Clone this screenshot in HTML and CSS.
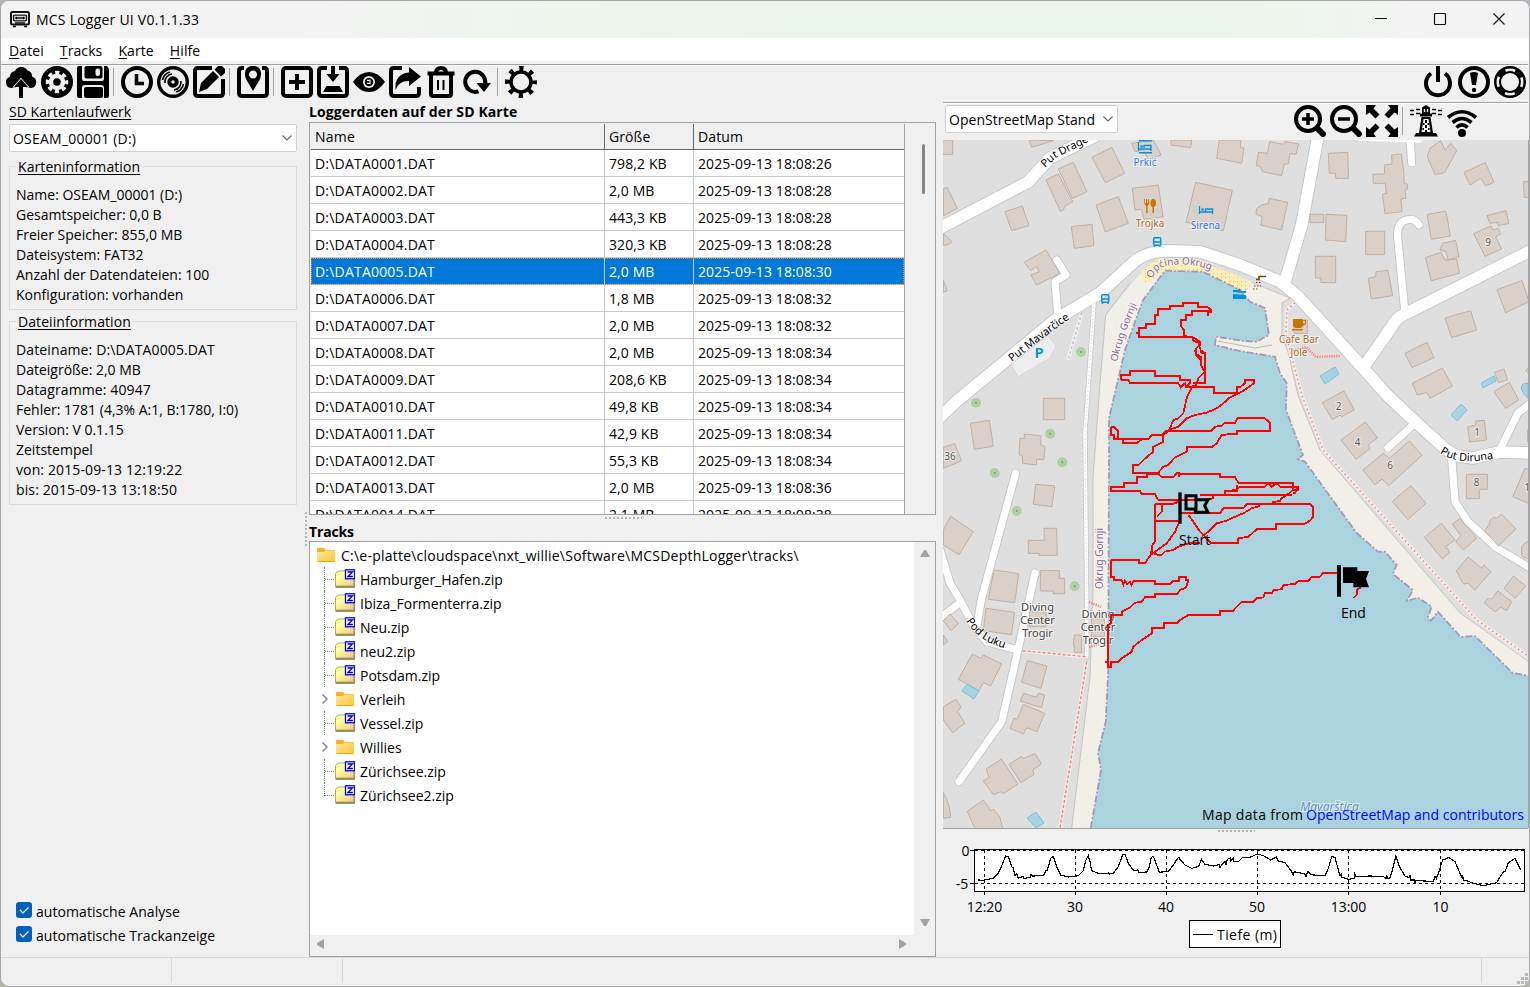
FILE: index.html
```html
<!DOCTYPE html>
<html lang="de">
<head>
<meta charset="utf-8">
<title>MCS Logger UI V0.1.1.33</title>
<link rel="stylesheet" href="styles.css">
</head>
<body>
<svg class="defs" width="0" height="0">
  <defs>
    <linearGradient id="fg" x1="0" y1="0" x2="1" y2="1"><stop offset="0" stop-color="#ffe9a6"/><stop offset="1" stop-color="#fcc62f"/></linearGradient>
    <linearGradient id="zg" x1="0" y1="0" x2="1" y2="1"><stop offset="0.3" stop-color="#ffff9c"/><stop offset="1" stop-color="#f5c586"/></linearGradient>
    <symbol id="folder" viewBox="0 0 20 18"><path d="M1 3q0-1 1-1h6l1.500 2H18q1 0 1 1v5H1z" fill="#f9b01d"/><path d="M1 6h7l1.500-1.500H19V15q0 1-1 1H2q-1 0-1-1z" fill="url(#fg)"/><path d="M1.500 15.600h17" stroke="#e5a21a"/></symbol>
    <symbol id="zip" viewBox="0 0 20 20"><path d="M0.500 17V4.500L3 2h7l1.500 2H19v13z" fill="url(#zg)" stroke="#b9ae5c"/><path d="M0.500 18h19.500" stroke="#77734a" stroke-width="1.500"/><path d="M19.300 9v9" stroke="#8a824f"/><rect x="10.500" y="0.800" width="9" height="9" fill="#fff" stroke="#00f" stroke-width="1.300"/><path d="M12.500 3h5l-4.600 4.500h4.900" fill="none" stroke="#00c" stroke-width="1.300"/></symbol>
    <symbol id="chev" viewBox="0 0 12 8"><path d="M1.500 1.500 6 6l4.500-4.500" fill="none" stroke="#666" stroke-width="1.100"/></symbol>
    <pattern id="dots" width="4" height="4" patternUnits="userSpaceOnUse"><rect width="4" height="4" fill="#fceeb5"/><rect x="1" y="1" width="1" height="1" fill="#dcc07f"/></pattern>
  </defs>
</svg>
<div class="window">
  <header class="titlebar">
    <svg class="appicon" width="20" height="17" viewBox="0 0 20 17"><rect x="1" y="1" width="18" height="12.500" rx="1.500" fill="#fff" stroke="#111" stroke-width="2"/><rect x="3.500" y="4.200" width="13" height="5.600" rx="1" fill="#ddd" stroke="#111" stroke-width="1.300"/><circle cx="6.500" cy="7" r="1.300"/><circle cx="13.500" cy="7" r="1.300"/><path d="M8 7h4M5 12h10M3 15.500h3M14 15.500h3" stroke="#111" stroke-width="1.500"/></svg>
    <span class="title">MCS Logger UI V0.1.1.33</span>
    <div class="winbtns">
      <svg width="14" height="14" viewBox="0 0 14 14"><path d="M1 5.500h12" stroke="#111"/></svg>
      <svg width="14" height="14" viewBox="0 0 14 14"><rect x="1.500" y="0.500" width="11" height="11" rx="1" fill="none" stroke="#111" stroke-width="1.200"/></svg>
      <svg width="14" height="14" viewBox="0 0 14 14"><path d="M1.500 .5l11 11M12.500 .5l-11 11" stroke="#111" stroke-width="1.100"/></svg>
    </div>
  </header>
  <nav class="menubar"><span><u>D</u>atei</span><span><u>T</u>racks</span><span><u>K</u>arte</span><span><u>H</u>ilfe</span></nav>
  <div class="toolbar">
    <div class="tools">
      <svg viewBox="0 0 32 32"><path d="M6 22a5.800 5.800 0 0 1-1-11.300A6 6 0 0 1 10 5 7 7 0 0 1 22.500 4.500 6 6 0 0 1 27 10.500 5.900 5.900 0 0 1 26 22h-4.500L16 12 10.500 22z"/><path d="M16 13l7 8h-5v11h-4V21H9z" stroke="#f0f0f0" stroke-width="1.600" paint-order="stroke"/></svg>
      <svg viewBox="0 0 32 32"><circle cx="16" cy="16" r="16"/><circle cx="16" cy="16" r="6" fill="none" stroke="#f0f0f0" stroke-width="4.500"/><circle cx="16" cy="16" r="9.500" fill="none" stroke="#f0f0f0" stroke-width="3.500" stroke-dasharray="4.200 3.261" stroke-dashoffset="2.100"/></svg>
      <svg viewBox="0 0 32 32"><path d="M2 0h3v13q0 2 2 2h18q2 0 2-2V0h3l2 3v27q0 2-2 2h-3V22q0-3-3-3H8q-3 0-3 3v10H2q-2 0-2-2V2q0-2 2-2z"/><rect x="7.500" y="0" width="18" height="12.500" rx="2"/><rect x="18.500" y="2.500" width="4.500" height="7.500" rx="2" fill="#f0f0f0"/><rect x="7" y="21" width="19" height="11" rx="2"/></svg>
      <i></i>
      <svg viewBox="0 0 32 32"><circle cx="16" cy="16" r="14" fill="none" stroke="#000" stroke-width="4"/><path d="M15.500 8v9.500H23" fill="none" stroke="#000" stroke-width="3.600"/></svg>
      <svg viewBox="0 0 32 32"><circle cx="16" cy="16" r="14.300" fill="none" stroke="#000" stroke-width="3.400"/><circle cx="16" cy="16" r="3.700" fill="none" stroke="#000" stroke-width="4"/><path d="M8 17A8 8 0 0 1 15 8M5.500 14A10.500 10.500 0 0 1 13 6M24 15A8 8 0 0 1 17 24M26.500 18A10.500 10.500 0 0 1 19 26" fill="none" stroke="#000" stroke-width="1.600"/></svg>
      <svg viewBox="0 0 32 32"><path d="M19 2H5Q2 2 2 5v22q0 3 3 3h22q3 0 3-3V13" fill="none" stroke="#000" stroke-width="4"/><path d="M6 26l2-9L20 5l6 6-12 12z"/><path d="M21.500 3.500L25 0h4l3 3v4l-4 3.500z"/></svg>
      <i></i>
      <svg viewBox="0 0 32 32"><path d="M7 2H5Q2 2 2 5v22q0 3 3 3h22q3 0 3-3V5q0-3-3-3h-2" fill="none" stroke="#000" stroke-width="4"/><path fill-rule="evenodd" d="M16 25L9.500 14Q6 6 10 2q6-4.500 12 0 4 4 .500 12zM16 4.500a4 4 0 1 0 .01 0z"/></svg>
      <i></i>
      <svg viewBox="0 0 32 32"><rect x="2" y="2" width="28" height="28" rx="3" fill="none" stroke="#000" stroke-width="4"/><path d="M16 8v16M8 16h16" stroke="#000" stroke-width="4"/></svg>
      <svg viewBox="0 0 32 32"><path d="M10 2H5Q2 2 2 5v22q0 3 3 3h22q3 0 3-3V5q0-3-3-3h-5" fill="none" stroke="#000" stroke-width="4"/><path d="M14 0h4v8h4.500L16 16 9.500 8H14zM9.500 20h13L26 26H6z"/></svg>
      <svg viewBox="0 0 32 32"><path d="M0 16Q7 6 16 6t16 10Q25 26 16 26T0 16z"/><circle cx="16" cy="16" r="6" fill="#f0f0f0"/><circle cx="16" cy="16" r="4.300"/><path d="M14 14.300h3v3h-3" fill="none" stroke="#f0f0f0" stroke-width="1.200"/></svg>
      <svg viewBox="0 0 32 32"><path d="M13 2H5Q2 2 2 5v22q0 3 3 3h22q3 0 3-3v-6" fill="none" stroke="#000" stroke-width="4"/><path d="M20 1l12 9.500L20 20v-5Q10 14.500 6.500 24 5 8 20 6.500z"/></svg>
      <svg viewBox="0 0 32 32"><path d="M2.500 5.500h27v4h-27z"/><path d="M11 7Q11 2 16 2t5 5" fill="none" stroke="#000" stroke-width="4"/><path d="M6 8v20q0 2 2 2h16q2 0 2-2V8" fill="none" stroke="#000" stroke-width="4"/><path d="M13 14v10M18.500 14v10" stroke="#000" stroke-width="2"/></svg>
      <svg viewBox="0 0 32 32"><path d="M17.500 25.300A10 10 0 1 1 24 18" fill="none" stroke="#000" stroke-width="4"/><path d="M15.500 17h14.500l-7 9z"/></svg>
      <i></i>
      <svg viewBox="0 0 32 32"><circle cx="16" cy="16" r="10" fill="none" stroke="#000" stroke-width="3.600"/><circle cx="16" cy="16" r="13.500" fill="none" stroke="#000" stroke-width="5" stroke-dasharray="4.200 6.403" stroke-dashoffset="2.100"/></svg>
    </div>
    <div class="tools end">
      <svg viewBox="0 0 32 32"><path d="M9 7.500a12 12 0 1 0 14 0" fill="none" stroke="#000" stroke-width="4"/><path d="M16 0v16" stroke="#000" stroke-width="4"/></svg>
      <svg viewBox="0 0 32 32"><circle cx="16" cy="16" r="14" fill="none" stroke="#000" stroke-width="4"/><path d="M12 7q4-2 8 0l-2 12h-4z"/><circle cx="16" cy="24" r="2.200"/></svg>
      <svg viewBox="0 0 32 32"><circle cx="16" cy="16" r="12.500" fill="none" stroke="#000" stroke-width="7"/><circle cx="16" cy="16" r="12.200" fill="none" stroke="#f0f0f0" stroke-width="2.600" stroke-dasharray="10 9.164" stroke-dashoffset="5"/></svg>
    </div>
  </div>

  <main class="main">
    <aside class="side">
      <div class="fieldlabel">SD Kartenlaufwerk</div>
      <div class="combo"><span>OSEAM_00001 (D:)</span><svg width="12" height="8"><use href="#chev"/></svg></div>
      <fieldset class="info card"><legend>Karteninformation</legend>
        <p>Name: OSEAM_00001 (D:)</p><p>Gesamtspeicher: 0,0 B</p><p>Freier Speicher: 855,0 MB</p><p>Dateisystem: FAT32</p><p>Anzahl der Datendateien: 100</p><p>Konfiguration: vorhanden</p>
      </fieldset>
      <fieldset class="info file"><legend>Dateiinformation</legend>
        <p class="wide">Dateiname: D:\DATA0005.DAT</p><p>Dateigröße: 2,0 MB</p><p class="wide">Datagramme: 40947</p><p>Fehler: 1781 (4,3% A:1, B:1780, I:0)</p><p>Version: V 0.1.15</p><p>Zeitstempel</p><p class="wide">von: 2015-09-13 12:19:22</p><p class="wide">bis: 2015-09-13 13:18:50</p>
      </fieldset>
      <div class="checks">
        <div class="check"><svg width="16" height="16" viewBox="0 0 16 16"><rect width="16" height="16" rx="3" fill="#0360b8"/><path d="M4 8l3 3 5.500-5.500" fill="none" stroke="#fff" stroke-width="1.200"/></svg><span>automatische Analyse</span></div>
        <div class="check"><svg width="16" height="16" viewBox="0 0 16 16"><rect width="16" height="16" rx="3" fill="#0360b8"/><path d="M4 8l3 3 5.500-5.500" fill="none" stroke="#fff" stroke-width="1.200"/></svg><span>automatische Trackanzeige</span></div>
      </div>
    </aside>
    <div class="vsplit"></div>
    <section class="middle">
      <h2>Loggerdaten auf der SD Karte</h2>
      <div class="listbox">
        <div class="grid">
          <div class="row head"><span>Name</span><span>Größe</span><span>Datum</span></div>
          <div class="row"><span>D:\DATA0001.DAT</span><span>798,2 KB</span><span>2025-09-13 18:08:26</span></div>
          <div class="row"><span>D:\DATA0002.DAT</span><span>2,0 MB</span><span>2025-09-13 18:08:28</span></div>
          <div class="row"><span>D:\DATA0003.DAT</span><span>443,3 KB</span><span>2025-09-13 18:08:28</span></div>
          <div class="row"><span>D:\DATA0004.DAT</span><span>320,3 KB</span><span>2025-09-13 18:08:28</span></div>
          <div class="row sel"><span>D:\DATA0005.DAT</span><span>2,0 MB</span><span>2025-09-13 18:08:30</span></div>
          <div class="row"><span>D:\DATA0006.DAT</span><span>1,8 MB</span><span>2025-09-13 18:08:32</span></div>
          <div class="row"><span>D:\DATA0007.DAT</span><span>2,0 MB</span><span>2025-09-13 18:08:32</span></div>
          <div class="row"><span>D:\DATA0008.DAT</span><span>2,0 MB</span><span>2025-09-13 18:08:34</span></div>
          <div class="row"><span>D:\DATA0009.DAT</span><span>208,6 KB</span><span>2025-09-13 18:08:34</span></div>
          <div class="row"><span>D:\DATA0010.DAT</span><span>49,8 KB</span><span>2025-09-13 18:08:34</span></div>
          <div class="row"><span>D:\DATA0011.DAT</span><span>42,9 KB</span><span>2025-09-13 18:08:34</span></div>
          <div class="row"><span>D:\DATA0012.DAT</span><span>55,3 KB</span><span>2025-09-13 18:08:34</span></div>
          <div class="row"><span>D:\DATA0013.DAT</span><span>2,0 MB</span><span>2025-09-13 18:08:36</span></div>
          <div class="row"><span>D:\DATA0014.DAT</span><span>2,1 MB</span><span>2025-09-13 18:08:38</span></div>
        </div>
        <div class="vscroll"><b></b></div>
      </div>
      <div class="hsplit list-split"></div>
      <h2 class="h-tracks">Tracks</h2>
      <div class="treebox">
        <div class="treetop">
          <ul class="tree">
            <li class="root"><svg width="20" height="18"><use href="#folder"/></svg><span>C:\e-platte\cloudspace\nxt_willie\Software\MCSDepthLogger\tracks\</span></li>
            <li><em></em><svg width="20" height="20"><use href="#zip"/></svg><span>Hamburger_Hafen.zip</span></li>
            <li><em></em><svg width="20" height="20"><use href="#zip"/></svg><span>Ibiza_Formenterra.zip</span></li>
            <li><em></em><svg width="20" height="20"><use href="#zip"/></svg><span>Neu.zip</span></li>
            <li><em></em><svg width="20" height="20"><use href="#zip"/></svg><span>neu2.zip</span></li>
            <li><em></em><svg width="20" height="20"><use href="#zip"/></svg><span>Potsdam.zip</span></li>
            <li class="dir"><em><svg width="8" height="12" viewBox="0 0 8 12"><path d="M1.500 1.500L6 6l-4.500 4.500" fill="none" stroke="#8a8a8a" stroke-width="1.500"/></svg></em><svg width="20" height="18"><use href="#folder"/></svg><span>Verleih</span></li>
            <li><em></em><svg width="20" height="20"><use href="#zip"/></svg><span>Vessel.zip</span></li>
            <li class="dir"><em><svg width="8" height="12" viewBox="0 0 8 12"><path d="M1.500 1.500L6 6l-4.500 4.500" fill="none" stroke="#8a8a8a" stroke-width="1.500"/></svg></em><svg width="20" height="18"><use href="#folder"/></svg><span>Willies</span></li>
            <li><em></em><svg width="20" height="20"><use href="#zip"/></svg><span>Zürichsee.zip</span></li>
            <li class="last"><em></em><svg width="20" height="20"><use href="#zip"/></svg><span>Zürichsee2.zip</span></li>
          </ul>
          <div class="arrows v"><svg width="10" height="8"><path d="M0 8L4 1h2l4 7z" fill="#a3a3a3"/></svg><svg width="10" height="8"><path d="M0 0l4 7h2l4-7z" fill="#a3a3a3"/></svg></div>
        </div>
        <div class="arrows h"><svg width="8" height="10"><path d="M8 0L1 4v2l7 4z" fill="#a3a3a3"/></svg><svg width="8" height="10"><path d="M0 0l7 4v2l-7 4z" fill="#a3a3a3"/></svg></div>
      </div>
    </section>
    <section class="right">
      <div class="mapbar">
        <div class="combo mapcombo"><span>OpenStreetMap Stand</span><svg width="12" height="8"><use href="#chev"/></svg></div>
        <div class="tools">
          <svg viewBox="0 0 32 32"><circle cx="14" cy="14" r="12" fill="none" stroke="#000" stroke-width="4"/><path d="M22 22l9 9" stroke="#000" stroke-width="6"/><path d="M14 8v12M8 14h12" stroke="#000" stroke-width="3.500"/></svg>
          <svg viewBox="0 0 32 32"><circle cx="14" cy="14" r="12" fill="none" stroke="#000" stroke-width="4"/><path d="M22 22l9 9" stroke="#000" stroke-width="6"/><path d="M8 14h12" stroke="#000" stroke-width="3.500"/></svg>
          <svg viewBox="0 0 32 32"><path d="M0 0h10L7.500 3.500l6 6-4 4-6-6L0 10zM32 0H22l2.500 3.500-6 6 4 4 6-6L32 10zM0 32h10l-2.500-3.500 6-6-4-4-6 6L0 22zM32 32H22l2.500-3.500-6-6 4-4 6 6L32 22z"/></svg>
          <i></i>
          <svg viewBox="0 0 32 32"><path d="M0 5.500h4M6 4.500h4M0 9.500h4M6 8.500h4M32 5.500h-4M26 4.500h-4M32 9.500h-4M26 8.500h-4" stroke="#000" stroke-width="1.300"/><path d="M12 2.500L16 0l4 2.500v6h2v3H10v-3h2zM11.500 12h9L23 28h3l2 3.500H4L6 28h3z"/><path d="M14.500 4v3M17.500 4v3" stroke="#f0f0f0" stroke-width="1.400"/><path d="M13.500 14h5l2 13h-9z" fill="#f0f0f0"/><path d="M16 15v3M16 20v3M16 25v2M13 19h1.500M17.500 19H19M12.500 24H14M18 24h1.500" stroke="#000" stroke-width="2"/></svg>
          <svg viewBox="0 0 32 32"><path d="M2 12.500Q16 1 30 12.500M6.500 17.500Q16 9.500 25.500 17.500M10.500 22.500Q16 17 21.500 22.500" fill="none" stroke="#000" stroke-width="3.600"/><circle cx="16" cy="28" r="4"/></svg>
        </div>
      </div>
      <svg class="map" width="585" height="688" viewBox="943 140 585 688">
        <defs>
          <path id="p1" d="M1045 168L1056 158 1086 143 1110 130"/>
          <path id="p2" d="M1012 362L1055 329 1075 315"/>
          <path id="p3" d="M1117 362Q1123 335 1139 300"/>
          <path id="p4" d="M1152 279Q1157 266 1172 265 1195 262 1220 274"/>
          <path id="p5" d="M1440 453Q1460 467 1500 457"/>
          <path id="p6" d="M966 621Q980 644 1012 650"/>
        </defs>
        <rect x="943" y="140" width="585" height="688" fill="#dfdfdf"/>
        <path class="sand" d="M1071.700 828L1090 677 1093 590 1093 477 1100 383 1105.700 315 1141.700 271.700 1160 258 1200 262 1251.700 281.700 1290 298 1282 303V335L1288 352 1298 395 1320 450 1460 613 1530 660V828z"/>
        <path d="M1141 272L1157 259 1200 263 1232 273 1251 283 1246 293 1203 272 1165 271 1144 285z" fill="url(#dots)"/>
        <path class="water" d="M1090.700 828L1101 770 1098 753 1105.700 721.700 1108.300 668 1108.500 590 1109 418 1125 350 1136.700 316.700 1143 300 1165 270.700 1203 271.700 1240 290 1250 301.700 1265 308 1269 335 1256.700 341.700 1243 341 1216 336.700 1215 345 1240 351 1275 356.700 1280 373 1286.700 383 1286 410 1303 455 1298 459 1305 461.700 1356.700 533 1378 551.700H1385L1396.700 565 1393 574 1413 590 1407 600.700 1418 597.700 1431.700 606.700 1428 617 1431 620.700 1438 611.700 1460.700 637 1475 636 1512.700 673 1530 676V830H1090z"/>
        <path d="M1218 341L1255 348 1272 345" fill="none" stroke="#aaa" stroke-width=".8"/>
        <g fill="none" stroke="#c4c4c4" stroke-linecap="round" stroke-linejoin="round">
          <g stroke-width="13.400"><path d="M938 229L1028 182 1050 158 1083 142 1095 136M938 419L958 400 1006.700 360 1055 320 1100 293 1135 261Q1146 252 1166.700 250.700L1200 251.700 1240 265 1280 281.700 1296.700 295 1363 368 1387 395 1416.700 423 1446.700 450 1457 456 1473 458 1500 452 1532 453M1318 136L1301.700 225 1285 281.700M1363 368L1391.700 326.700Q1396 318 1405 314L1532 250"/></g>
          <g stroke-width="9"><path d="M1405 313L1397.700 238Q1396 220 1410 219.500 1415 219 1419 225M1411.700 163L1410 138M1388 448L1413 425M1451.700 458L1455 501.700 1468 521.700 1496.700 548 1532 569M1499 451.700L1518 413 1532 402M1015.700 473L981.700 598 976.700 627M1035 573L1018 650 1001.700 721.700 959 781.700M940 550L950 583 960 600 973 625 986.700 641.700 1018 650M940 618L957 605M1058 316L1055 281.700 1066 275 1056.700 260"/></g>
          <path stroke-width="5" d="M1094 303L1085 433 1086.700 600V657"/>
        </g>
        <g fill="none" stroke="#fff" stroke-linecap="round" stroke-linejoin="round">
          <g stroke-width="11.600"><path d="M938 229L1028 182 1050 158 1083 142 1095 136M938 419L958 400 1006.700 360 1055 320 1100 293 1135 261Q1146 252 1166.700 250.700L1200 251.700 1240 265 1280 281.700 1296.700 295 1363 368 1387 395 1416.700 423 1446.700 450 1457 456 1473 458 1500 452 1532 453M1318 136L1301.700 225 1285 281.700M1363 368L1391.700 326.700Q1396 318 1405 314L1532 250"/></g>
          <g stroke-width="7.200"><path d="M1405 313L1397.700 238Q1396 220 1410 219.500 1415 219 1419 225M1411.700 163L1410 138M1388 448L1413 425M1451.700 458L1455 501.700 1468 521.700 1496.700 548 1532 569M1499 451.700L1518 413 1532 402M1015.700 473L981.700 598 976.700 627M1035 573L1018 650 1001.700 721.700 959 781.700M940 550L950 583 960 600 973 625 986.700 641.700 1018 650M940 618L957 605M1058 316L1055 281.700 1066 275 1056.700 260"/></g>
          <path stroke-width="3.600" d="M1094 303L1085 433 1086.700 600V657M1360 139L1420 141"/>
        </g>
        <g fill="none">
          <path d="M1094 303L1085 433 1086.700 600V657" stroke="#ccc" stroke-dasharray="1 3"/>
          <path d="M1081.700 313L1068 360" stroke="#eee" stroke-width="4"/><path d="M1081.700 313L1068 360" stroke="#bbb" stroke-width="1.500" stroke-dasharray="2 3"/>
          <path d="M1105.700 315L1100 383 1093 477V590L1090 677 1071.700 828M1105.700 315L1130 283M1251 282L1290 298 1282 303V335L1288 352 1298 395 1320 450 1460 613 1528 661" stroke="#c4c4c4"/>
          <path d="M1022.700 650.700L1086.700 656.700M1086.700 661.700L1060 828M1295 303L1286.700 310 1286 335 1301.700 395 1323 450 1476.700 620 1528 656" stroke="#f0eeee" stroke-width="3.500"/>
          <path d="M1022.700 650.700L1086.700 656.700M1086.700 661.700L1060 828" stroke="#fa8072" stroke-width="1.400" stroke-dasharray="3 2"/>
          <path d="M1295 303L1286.700 310 1286 335 1301.700 395 1323 450 1476.700 620 1528 656" stroke="#fa8072" stroke-width="1.500" stroke-dasharray="1.500 3"/>
          <path d="M1293 351L1306 347 1316 357 1340 356M1089 602L1101 607M1089 647L1100 644" stroke="#fa8072" stroke-width="2.600" stroke-dasharray="1.200 1.200"/>
          <path class="border" d="M1090.700 828L1101 770 1098 753 1105.700 721.700 1108.300 668 1108.500 590 1109 418 1125 350 1136.700 316.700 1143 300 1165 270.700 1203 271.700 1240 290 1250 301.700 1265 308 1269 335 1256.700 341.700 1243 341 1216 336.700 1215 345 1240 351 1275 356.700 1280 373 1286.700 383 1286 410 1303 455 1298 459 1305 461.700 1356.700 533 1378 551.700H1385L1396.700 565 1393 574 1413 590 1407 600.700 1418 597.700 1431.700 606.700 1428 617 1431 620.700 1438 611.700 1460.700 637 1475 636 1512.700 673 1530 676"/>
        </g>
        <path d="M1011 364L1048 336 1056 346 1050 358 1018 377z" fill="#ededed" stroke="#d9c9c9" stroke-width=".7"/>
        <g class="bld">
          <path transform="translate(940 100) scale(.33333)" d="M0,120H38V163H0zM268,120L275,142 340,122zM10,265L22,263 52,325 10,348zM10,400L36,425 28,432 10,437zM195,335L247,318 267,377 215,392zM318,240L355,222 398,305 375,318 370,330 362,335zM355,207L400,187 441,275 398,295zM456,172L516,142 554,220 496,248zM468,315L535,290 565,370 496,396zM394,380L456,373 462,437 403,445zM252,487L318,450 360,520 290,555 273,525 298,515 290,500 272,512zM575,130L640,120 663,165 625,180 610,150 585,155zM577,265L655,255 669,350 612,358 605,328 585,330zM767,247L877,271 850,392 738,367zM693,120H755L752,143 693,135zM838,120L830,175 905,190 910,158 912,145 902,142V120zM10,540L22,572 10,577z"/>
          <path transform="translate(1230 135) scale(.33333)" d="M119,20L160,28 165,20 206,27 198,58 180,55 175,87 163,87 155,122 97,110 92,95 79,92 85,52 112,55zM295,55L353,52 356,130 318,130 316,115 298,115zM485,60L514,57 521,108 523,145 533,148 532,163 525,165 528,190 513,192 516,230 465,236 457,178 469,175 466,145 430,145 429,118 464,117 463,90 486,87zM592,65L600,40 632,17 645,45 662,25 680,47 644,113 615,119zM702,112L766,83 792,142 767,152 752,130 720,150zM880,140H900V187H883zM80,220L95,210 115,205 118,190 173,202 155,285 92,270 97,245 78,238zM240,238H281V263H240zM288,238L351,241 347,320 286,315zM407,289H464V359H407zM256,364H317V443H273V429H256zM415,430L437,425 438,410 474,406 488,482 424,492zM591,238L648,229 661,303 604,313zM586,368L633,352 645,375 680,372 689,415 604,437zM630,345L637,325 677,316 687,365 655,375 648,350zM731,296L783,273 790,285 805,280 812,297 797,305 815,342 765,364zM771,242L828,227 837,265 805,272 803,262 780,265zM801,464L876,437 897,500 827,533zM645,549L722,527 740,585 665,608zM525,655L591,622 612,668 546,698zM793,712L822,702 833,735 805,743zM887,705L900,695V720zM190,555H232V595H192z"/>
          <path transform="translate(940 350) scale(.33333)" d="M91,220L148,211 160,289 103,298zM10,292L44,281 65,333 10,355zM310,145H374V209H310zM253,252L303,257 302,285 315,290 312,328 290,328 289,345 248,340 247,318 237,313 240,265 253,265zM287,403L344,408 336,470 280,463zM32,499L100,545 57,614 10,585V540zM312,535H350L352,616H297V610H265V571H313zM162,660L236,671 224,758 145,748zM301,662H358V685H374V731H340V723H301z"/>
          <path transform="translate(1230 380) scale(.33333)" d="M277,68L342,33 373,90 335,110 330,105 307,119zM333,180L406,126 443,174 415,193 420,207 378,238zM399,270L460,220 478,235 538,183 576,226 476,317 456,297 435,315zM487,364L543,317 588,370 533,419zM547,10L637,-36 667,18 600,55 590,38 562,45zM791,35L838,7 866,60 827,85zM713,140L737,135V123L763,121 770,180 719,186zM709,283H772V328H748V356H709zM885,265L900,270V372L848,350zM893,150h10v35h-10zM583,472L634,430 675,480 647,500 660,517 637,537zM667,432L690,415 740,475 700,510 677,485 693,467zM764,452L780,430 777,425 790,412 800,415 815,403 858,447 805,498zM875,500L890,485 900,490V540L875,528zM679,573L714,531 755,565 762,555 783,575 734,631 715,610 700,612zM822,625L850,588 887,618 855,655zM762,668L775,655 785,658 803,633 845,665 830,692 812,682 795,695z"/>
          <path transform="translate(940 590) scale(.33333)" d="M138,55L224,67 214,134 130,122zM268,65h50v45h-50zM10,92L30,72 56,100 33,122zM10,135L23,155 10,165zM97,192L123,205 130,195 185,222 152,288 130,278 117,302 55,268zM262,212L321,228 303,295 245,277zM250,310L290,322 295,310 314,315 305,353 241,333zM250,343L314,370 291,425 260,413 250,432 210,415 222,385 232,387zM10,350L48,328 63,350 53,365 75,400 38,428 10,390zM139,537L184,507 234,582 190,611 182,605 160,614 130,573 147,562zM207,523L243,500 252,505 285,490 305,522 278,540 282,553 243,578zM10,608Q30,640 32,682L10,685zM82,664L130,630 152,662 160,657 180,682 188,716H105zM403,135h22v52h-22v-20h-3zM455,85h38v55h-38z"/>
        </g>
        <g class="pool"><path d="M1320 376L1335 367 1339 374 1325 384zM1481 383L1494 376 1496 381 1483 388zM1451 415L1461 404 1467 410 1457 421zM962 691L967 684 979 691 974 699zM1027 818L1036 812 1044 823 1036 828zM1528 398Q1519 390 1522 385 1524 383 1528 383z"/></g>
        <g fill="#aed1a0"><circle cx="1081" cy="352" r="5"/><circle cx="976" cy="402.700" r="5"/><circle cx="1050.300" cy="433.700" r="5"/><circle cx="1062.300" cy="462.300" r="5"/><circle cx="994.700" cy="473" r="5"/><circle cx="1016.700" cy="511" r="5"/><circle cx="1074.700" cy="586.300" r="5"/></g>
        <g fill="#769b6c"><circle cx="1081" cy="352" r="1"/><circle cx="976" cy="402.700" r="1"/><circle cx="1050.300" cy="433.700" r="1"/><circle cx="1062.300" cy="462.300" r="1"/><circle cx="994.700" cy="473" r="1"/><circle cx="1016.700" cy="511" r="1"/><circle cx="1074.700" cy="586.300" r="1"/></g>
        <g fill="none" stroke="#0092da" stroke-width="1.300"><path d="M1138.500 142v9M1138.500 149h12.500M1151 151v-5.500h-7v2.500M1199.500 206v8M1199.500 212h13M1212.500 214v-5h-7v2.500"/></g>
        <g fill="#0092da"><circle cx="1141.500" cy="146.500" r="1.300"/><circle cx="1202.500" cy="209.500" r="1.300"/><path d="M1139 140h13v1.500h-13zM1139 152h13v1.500h-13zM1233 290h5l1-2 2 3h5v2l-13-1zM1233 294l13 1v4h-13z"/></g>
        <g fill="none" stroke="#0092da" stroke-width="1.500"><rect x="1153.700" y="237.700" width="7" height="7.500" rx="1"/><path d="M1154 242h7M1154.500 247v-1M1160 247v-1"/><rect x="1101.700" y="294.700" width="7" height="7.500" rx="1"/><path d="M1102 299h7M1102.500 304v-1M1108 304v-1"/></g>
        <g fill="#c77400"><path d="M1144 199h1v4h1v-4h1.200v4h1v-4h1v5l-1.600 2v7h-1.400v-7l-1.700-2z"/><ellipse cx="1153.200" cy="203" rx="2.800" ry="4"/><path d="M1152.500 205h1.500v8h-1.500zM1293 319h10v1h3v4l-3 2-2 2h-6l-2-2zM1292 329h11v1.500h-11z"/></g>
        <path d="M1303 321h1.800v2.500h-1.800z" fill="#dfdfdf"/><path d="M1256 279.500h3v-3h7" fill="none" stroke="#734a08" stroke-width="1.600"/><path d="M1256 282.500h6M1254 286h7M1253 289h6" stroke="#734a08" stroke-width="1.200" stroke-dasharray="1.500 1.500"/>
        <g class="lab">
          <g class="road"><text><textPath href="#p1">Put Drage</textPath></text><text><textPath href="#p2">Put Mavarčice</textPath></text><text><textPath href="#p5">Put Diruna</textPath></text><text><textPath href="#p6">Pod Luku</textPath></text></g>
          <g class="adm"><text><textPath href="#p3">Okrug Gornji</textPath></text><text><textPath href="#p4">Općina Okrug</textPath></text><text transform="translate(1103 589) rotate(-90)">Okrug Gornji</text></g>
          <g class="hotel"><text x="1145" y="166">Prkić</text><text x="1205.500" y="228.500">Sirena</text></g>
          <g class="food"><text x="1150" y="227">Trojka</text><text x="1299" y="343">Cafe Bar</text><text x="1299" y="356">Jole</text></g>
          <g class="shop"><text x="1037.500" y="611">Diving</text><text x="1037.500" y="624">Center</text><text x="1037.500" y="637">Trogir</text><text x="1098" y="618">Diving</text><text x="1098" y="631">Center</text><text x="1098" y="644">Trogir</text></g>
          <g class="num"><text x="1488" y="246">9</text><text x="1338.500" y="410">2</text><text x="1357.500" y="446">4</text><text x="1390" y="469">6</text><text x="1477" y="436">1</text><text x="1476.500" y="486">8</text><text x="950" y="460">36</text><text x="1527" y="491">1</text></g>
          <text x="1039" y="358" class="park">P</text>
          <text x="1329.500" y="811" class="bay">Mavarštica</text>
        </g>
        <g class="track">
          <path transform="translate(940 100) scale(.33333)" d="M805,648V637H812V628L800,620H775V608H730V618H690V628H655V645H645V672H618V683H597V698H588M597,698V710H755L780,725V735L768,745V765L780,778M812,632H755V645H738V660H722V678L732,690V705L740,710M760,715V722L775,728 785,760H795V778"/>
          <path transform="translate(940 350) scale(.33333)" d="M765,0L768,12 782,20V45L795,65V100H760M785,0L795,12V65L775,85 768,105 755,112 740,145 730,190 715,205 700,210 688,240 670,255V275L640,290V305L610,330 595,345H580V370H655M543,90V75H570V62H645V78H720V90H750V100L735,112M543,90H565L570,100H715L722,112 735,100 740,112 765,108M755,112H822V128H890V112H900L915,100V90H942V100L925,112 905,125 885,135 870,142 850,160 830,175 800,188 765,195 740,205 715,230 690,238M513,232V255H522V268H550V280H590L605,268H625L635,255H665L680,242H815L825,230 845,228 855,218H885L893,203H972L990,218V242H890V253H865L845,255 830,280 815,292H740V305L705,322 685,345 670,350 655,368M513,232L522,230 535,245V268H605M655,370L665,382H700L710,370H718V380M715,371H840V382H885L895,398H1058V420L1045,432 1025,445 1020,453 995,457M870,423L890,418 900,410H975L985,400 995,410 1010,400 1020,410H1060V420H1075V410H1058M1075,410L1065,430H1058M655,372H620V382H590V398H552V410H513V422H600L605,433H645L655,450H800L820,445V435M650,462H700L715,455M645,462V575L637,585V615M645,462H665V485L650,500M645,512H720L705,545 680,580 655,598 640,610 655,615H665L675,605 700,600 715,590 745,580H780M780,435H1055M855,433V423H890V405M720,490H840L850,475H910L920,462H1110L1120,472V500L1110,512 1090,523H1008V538H950L925,560 895,565V578H812L795,560 780,545 760,515 745,495M785,560L805,545 830,520 860,512 890,498 910,490 935,475 960,468M513,630H597V640H615L622,628 632,615 635,600M513,630V680H522V690H545L550,705 555,692 562,703 570,695 575,705 580,693H645V703H690L700,692H718V680H738V690H745L738,713 720,720 712,732H645V742H615L605,755 585,758 570,772 545,785V795H513V820L505,825V935H495M505,932V952H513V935H535L545,925 575,905 580,890 605,870 635,850V835H672V820H710L720,810 745,795H840V782H880L890,770 905,755H940L950,745 970,742 975,730H995L1000,720 1025,718 1030,705 1065,702 1075,693H1105L1115,680H1140L1150,668H1195M1263,712L1250,720V735L1240,745"/>
        </g>
        <g transform="translate(940 350) scale(.33333)"><path d="M715,427h10v94h-10z"/><path fill="none" stroke="#000" stroke-width="9" d="M738,437h30v40h-30zM772,449h32l-10,18 10,20h-38v-12"/></g>
        <g transform="translate(1230 380) scale(.33333)"><path d="M321,555h12v95h-12zM339,562h43v11h35l-9,24 9,25h-47v-13h-31z"/></g>
        <g class="maptext"><text x="1179" y="545">Start</text><text x="1341" y="618">End</text><text x="1202" y="820" textLength="101">Map data from</text><text x="1306" y="820" textLength="218" class="link">OpenStreetMap and contributors</text></g>
      </svg>
      <div class="hsplit map-split"></div>
      <svg class="chart" width="585" height="124" viewBox="943 833 585 124">
        <rect x="974.500" y="849.500" width="550" height="42" fill="#fff" stroke="#000"/>
        <path d="M970 850.500h4M970 883.500h4M984.500 892v3M1075.500 892v3M1166.500 892v3M1257.500 892v3M1348.500 892v3M1440.500 892v3" stroke="#000"/>
        <path d="M975 850.500h549M975 883.500h549M984.500 850v41M1075.500 850v41M1166.500 850v41M1257.500 850v41M1348.500 850v41M1440.500 850v41" stroke="#000" stroke-dasharray="3 3"/>
        <path transform="translate(940 830) scale(.33333)" class="line" d="M115,150L130,151 160,145 175,130 185,108 197,78 205,80 215,110 219,113 225,137 230,132 235,144 249,140 250,146 270,142 273,132 277,138 310,137 318,122 322,120 332,85 340,80 350,110 362,135 385,141 415,137 430,122 438,90 445,77 450,95 455,122 475,130 504,130 505,125 507,132 520,130 535,110 548,75 555,73 565,100 580,120 592,122 593,116 595,128 620,126 628,110 634,82 640,79 648,100 658,127 685,124 700,105 712,86 717,82 720,88 735,105 755,115 775,110 785,88 795,103 820,108 838,104 840,112 847,102 855,94 858,104 862,88 870,84 872,94 880,85 882,95 895,95 908,82 930,82 952,72 970,77 992,90 1010,80 1012,92 1035,98 1055,125 1060,135 1063,125 1095,132 1098,140 1103,125 1108,127 1112,133 1120,135 1155,137 1165,115 1175,80 1185,82 1195,120 1200,137 1204,133 1206,142 1225,148 1243,145 1244,132 1248,140 1290,138 1330,140 1338,145 1340,134 1342,145 1350,144 1360,110 1368,78 1378,110 1395,138 1408,143 1410,136 1412,150 1424,150 1425,162 1427,151 1480,155 1485,138 1489,145 1495,130 1508,90 1520,86 1525,82 1545,95 1560,130 1566,142 1568,136 1570,150 1580,152 1600,160 1630,167 1670,158 1690,125 1695,125 1705,98 1710,95 1725,85 1742,120"/>
        <g class="axis"><text x="965.500" y="856">0</text><text x="962" y="889">-5</text><text x="984.500" y="912">12:20</text><text x="1075" y="912">30</text><text x="1166" y="912">40</text><text x="1257" y="912">50</text><text x="1348.500" y="912">13:00</text><text x="1440.500" y="912">10</text></g>
        <rect x="1189.500" y="920.500" width="91" height="27" fill="#fff" stroke="#000"/><path d="M1193 934.500h20" stroke="#000"/><text class="axistext" x="1217" y="940" textLength="60">Tiefe (m)</text>
      </svg>
    </section>
  </main>
  <footer class="status"><span></span><span></span><span class="grow"></span><svg width="47" height="27"><g fill="#b8b8b8"><path d="M43 15h3v3h-3zM43 19h3v3h-3zM43 23h3v3h-3zM39 19h3v3h-3zM39 23h3v3h-3zM35 23h3v3h-3z"/></g></svg></footer>
</div>
</body>
</html>
```
FILE: styles.css
```css
* { box-sizing: border-box; }
body { margin: 0; width: 1530px; height: 987px; overflow: hidden; background: #b5b5a8; font: 14px/20px "Open Sans", "Noto Sans", sans-serif; color: #000; }
.defs { display: block; width: 0; height: 0; position: absolute; }
.window { width: 1530px; height: 987px; display: flex; flex-direction: column; background: #f0f0f0; border: 1px solid #a6a6a6; border-radius: 9px; overflow: hidden; }
.titlebar { height: 37px; flex: none; display: flex; align-items: center; padding: 0 23px 0 9px; background: linear-gradient(90deg, #f3f3f3 20%, #edf5ed 37%, #eaf6ea 58%, #ebf6eb 80%, #f3f3f3 93%); }
.appicon { margin-right: 6px; }
.title { flex: 1; letter-spacing: .23px; }
.winbtns { display: flex; gap: 45px; }
.winbtns svg { display: block; }
.menubar { height: 23px; flex: none; background: #fff; display: flex; gap: 16px; padding: 3px 8px; letter-spacing: .1px; }
.menubar u { text-underline-offset: 2px; }
.toolbar { flex: none; margin: 3px 1px 0 0; height: 35px; border-top: 1px solid #a0a0a0; box-shadow: inset 0 1px #fff; display: flex; justify-content: space-between; padding: 1px 2px 0 4px; }
.tools { display: flex; gap: 4px; height: 32px; }
.tools svg { width: 32px; height: 32px; display: block; }
.tools i { width: 4px; margin: 2px 0; border-left: 1px solid #a0a0a0; }
.main { height: 858px; flex: none; display: flex; }
.side { width: 303px; padding: 3px 7px 0 8px; display: flex; flex-direction: column; }
.fieldlabel { height: 21px; text-decoration: underline; text-underline-offset: 2px; letter-spacing: .05px; }
.combo { width: 288px; height: 28px; margin-top: 1px; background: #fff; border: 1px solid #d0d0d0; border-radius: 2px; display: flex; align-items: center; justify-content: space-between; padding: 0 3px; letter-spacing: .22px; }
.combo span { padding-top: 1px; }
.info { width: 288px; border: 1px solid #dcdcdc; margin: 0; padding: 0 6px; }
.info legend { padding: 0 2px; height: 20px; line-height: 22px; text-decoration: underline; text-underline-offset: 2px; letter-spacing: .08px; }
.info p { margin: 0; height: 20px; line-height: 22px; white-space: nowrap; letter-spacing: 0; }
.info p.wide { letter-spacing: .12px; }
.card { height: 154px; margin-top: 4px; padding-top: 8px; }
.file { height: 194px; margin-top: 1px; padding-top: 8px; }
.checks { margin-top: auto; margin-bottom: 9px; padding-left: 7px; }
.check { display: flex; height: 24px; align-items: center; gap: 4px; letter-spacing: .06px; }
.check svg { margin-top: -5px; }
.vsplit { width: 5px; background: radial-gradient(circle, #b5b5b5 1px, transparent 1.300px) 0 0/4px 4px; height: 36px; align-self: flex-start; margin-top: 412px; }
.middle { width: 627px; display: flex; flex-direction: column; padding-top: 3px; }
h2 { margin: 0; font-size: 14px; line-height: 20px; height: 20px; font-weight: 700; letter-spacing: .1px; }
.listbox { height: 393px; flex: none; border: 1px solid #a0a0a0; display: flex; background: #f0f0f0; overflow: hidden; padding: 1px 0 0 1px; }
.grid { width: 594px; height: 390px; overflow: hidden; border-right: 1px solid #a0a0a0; background: #fff; }
.row { display: grid; grid-template-columns: 294px 89px 210px; height: 27px; border-bottom: 1px solid #c8c8c8; line-height: 27px; letter-spacing: .1px; }
.row span { height: 26px; padding-left: 4px; border-right: 1px solid #c8c8c8; white-space: nowrap; }
.row span:first-child { letter-spacing: .2px; }
.row span:last-child { border-right: 0; }
.row.head { height: 26px; background: #f0f0f0; border-bottom: 1px solid #696969; line-height: 26px; }
.row.head span { height: 25px; border-color: #696969; }
.row.sel { background: #0078d7; color: #fff; outline: 1px dotted #e88b28; outline-offset: -1px; }
.vscroll { flex: 1; padding: 20px 0 0 17px; }
.vscroll b { display: block; width: 3px; height: 50px; background: #858585; border-radius: 2px; }
.hsplit { height: 5px; width: 38px; flex: none; align-self: center; background: radial-gradient(circle, #b5b5b5 1px, transparent 1.300px) 0 0/4px 4px; }
.list-split { margin-top: 1px; }
.h-tracks { margin-top: 1px; height: 19px; flex: none; letter-spacing: -.15px; }
.treebox { height: 416px; border: 1px solid #a0a0a0; background: #fff; display: flex; flex-direction: column; }
.treetop { flex: 1; display: flex; }
.tree { list-style: none; margin: 0; padding: 1px 0 0; flex: 1; }
.tree li { display: flex; height: 24px; align-items: center; white-space: nowrap; padding-left: 14px; }
.tree li.root { padding-left: 6px; letter-spacing: .23px; }
.tree li > svg { flex: none; }
.tree li > span { margin-left: 5px; margin-top: 1px; }
.tree em { width: 11px; height: 24px; flex: none; border-left: 1px dotted #777; background: linear-gradient(90deg, #888 50%, transparent 0) 0 12px/2px 1px repeat-x; display: flex; align-items: center; }
.tree li.dir em { background: none; border-color: transparent; margin-left: -4px; margin-right: 4px; }
.tree li.last em { height: 13px; align-self: flex-start; }
.arrows { background: #f0f0f0; display: flex; justify-content: space-between; align-items: center; }
.arrows.v { width: 21px; flex-direction: column; padding: 7px 0 8px; }
.arrows.h { height: 21px; padding: 0 28px 3px 6px; }
.right { width: 585px; margin-left: 7px; display: flex; flex-direction: column; }
.mapbar { height: 38px; flex: none; margin-top: 3px; border-top: 1px solid #a0a0a0; box-shadow: inset 0 1px #fff; display: flex; justify-content: space-between; padding: 2px 50px 0 2px; }
.mapcombo { width: 173px; margin-top: 0; letter-spacing: .05px; }
.mapcombo span { width: 147px; white-space: nowrap; overflow: hidden; }
.map { display: block; flex: none; box-shadow: 0 1px #a0a0a0, 1px 0 #a0a0a0; }
.map-split { margin-top: 1px; height: 4px; }
.chart { display: block; flex: none; }
.sand { fill: #f2efe9; }
.water { fill: #aad3df; }
.border { stroke: #9c83a8; stroke-width: 1.700; stroke-opacity: .8; stroke-dasharray: 7 2 2 2; }
.bld path { fill: #d9d0c9; stroke: #c0afa3; stroke-width: 3; }
.pool path { fill: #aad3df; stroke: #75c2dc; stroke-width: 1; }
.lab { font: 11px "Noto Sans", sans-serif; }
.lab text { paint-order: stroke; stroke: rgba(255,255,255,.65); stroke-width: 2px; }
.road { fill: #000; }
.adm { fill: #8d618b; font-size: 10px; }
.hotel { fill: #2f73f0; text-anchor: middle; font-size: 10px; }
.food { fill: #b06a1c; text-anchor: middle; font-size: 10px; }
.shop { fill: #444; text-anchor: middle; }
.num { fill: #555; text-anchor: middle; font-size: 10px; }
.lab .park { fill: #0092da; text-anchor: middle; font-size: 15px; font-weight: 600; stroke: none; }
.lab .bay { fill: #5a8fc5; text-anchor: middle; font-size: 12px; font-style: italic; }
.track path { fill: none; stroke: #f00; stroke-width: 5.500; shape-rendering: crispEdges; }
.maptext, .axis, .axistext { font: 14px "Open Sans", "Noto Sans", sans-serif; }
.link { fill: #00f; }
.axis { text-anchor: middle; }
.line { fill: none; stroke: #000; stroke-width: 3.600; shape-rendering: crispEdges; }
.status { height: 28px; flex: none; border-top: 1px solid #d7d7d7; display: flex; }
.status span { width: 171px; border-right: 1px solid #d7d7d7; margin-bottom: 2px; }
.status .grow { flex: 1; }
```
